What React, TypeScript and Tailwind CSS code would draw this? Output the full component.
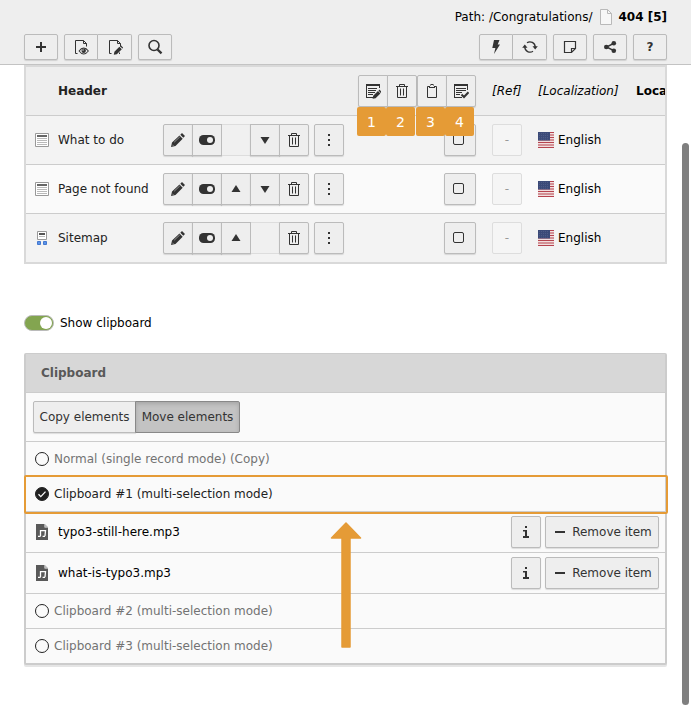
import { useState, type ReactNode } from 'react';

type IconProps = { children: ReactNode; className?: string };

function Icon({ children, className = '' }: IconProps) {
  return (
    <svg viewBox="0 0 16 16" aria-hidden="true" className={`size-4 shrink-0 ${className}`} fill="currentColor">
      {children}
    </svg>
  );
}

const PlusIcon = () => (
  <Icon>
    <path d="M7 3h2v4h4v2H9v4H7V9H3V7h4z" />
  </Icon>
);

const sheet = 'M4.500 14.500h-2v-13h8l3 3v3M10.500 1.500v3h3';

const ViewPageIcon = () => (
  <Icon>
    <path d={sheet} fill="none" stroke="currentColor" />
    <path fillRule="evenodd" d="M5.500 12Q8 8.600 10.700 8.600T16 12Q13.400 15.400 10.700 15.400T5.500 12zM6.700 12Q8.600 14.500 10.700 14.500T14.800 12Q12.800 9.500 10.700 9.500T6.700 12z" />
    <circle cx="10.700" cy="11.800" r="2.200" />
    <circle cx="10" cy="11" r=".7" fill="#eee" />
  </Icon>
);

const EditPageIcon = () => (
  <Icon>
    <path d={sheet} fill="none" stroke="currentColor" />
    <path d="M6.800 15.800l.6-3 5-5 2.400 2.400-5 5zM13 7.200l.9-.9 2.400 2.400-.9.9zM13 13v2h-1v-1z" />
  </Icon>
);

const SearchIcon = () => (
  <Icon>
    <circle cx="7" cy="6.500" r="5" fill="none" stroke="currentColor" strokeWidth="1.600" />
    <path d="M10.500 10.500l4 3.800" stroke="currentColor" strokeWidth="2.400" />
  </Icon>
);

const BoltIcon = () => (
  <Icon>
    <path d="M6 1h5.500L9.700 5.500H12L6 15l1.400-6H4.300z" />
  </Icon>
);

const RefreshIcon = () => (
  <Icon>
    <path d="M5 3.800A5.200 5.200 0 0 1 13.200 8M11 12.200A5.200 5.200 0 0 1 2.800 8" fill="none" stroke="currentColor" strokeWidth="1.300" />
    <path d="M10.500 7.300h5.300l-2.600 3.200zM.2 8.700h5.300L2.800 5.500z" />
  </Icon>
);

const NoteIcon = () => (
  <Icon>
    <path d="M2.500 2.500h11v7l-4 4h-7zM13 9.500H9.500V13" fill="none" stroke="currentColor" strokeWidth="1.200" />
  </Icon>
);

const ShareIcon = () => (
  <Icon>
    <path d="M11.800 4.300L4.500 8l7.300 3.700" fill="none" stroke="currentColor" strokeWidth="1.500" />
    <circle cx="11.800" cy="4.300" r="2.300" />
    <circle cx="4.300" cy="8" r="2.300" />
    <circle cx="11.800" cy="11.700" r="2.300" />
  </Icon>
);

const PageIcon = () => (
  <Icon className="text-[#b9b9b9]">
    <path d="M2.500 .5h7l4 4v11h-11z" fill="#f7f7f7" stroke="currentColor" />
    <path d="M9.500 .5v4h4" fill="none" stroke="currentColor" />
  </Icon>
);

const EditListIcon = () => (
  <Icon>
    <path d="M1 1h14v2H1zM1 1h1v14H1zM14 1h1v4h-1zM1 14h7v1H1zM3 5h9v1H3zM3 7h8v1H3zM3 9h7v1H3zM3 11h5v1H3z" />
    <path d="M7.600 15.800l.6-3 4.800-4.800 2.400 2.400-4.800 4.800zM13.500 7.500l1-1 2.100 2.400-1 1z" />
  </Icon>
);

const CheckListIcon = () => (
  <Icon>
    <path d="M1 1h14v2H1zM1 1h1v14H1zM14 1h1v6h-1zM1 14h8v1H1zM3 5h10v1H3zM3 7h10v1H3zM3 9h6v1H3zM3 11h4v1H3z" />
    <path d="M8.500 11.500l2.500 2.500 4.500-4.800" fill="none" stroke="currentColor" strokeWidth="2" />
  </Icon>
);

const TrashIcon = () => (
  <Icon>
    <path d="M5.500 3V1.500h5V3M2 3.500h12M3.500 3.500v11h9v-11M6.500 5.500v7M9.500 5.500v7" fill="none" stroke="currentColor" />
  </Icon>
);

const ClipboardIcon = () => (
  <Icon>
    <path d="M3.500 3.500h9v11h-9z" fill="none" stroke="currentColor" />
    <path d="M5 5V3h1.500V1h3v2H11v2z" />
    <path d="M6 4h4V3H9V2H7v1H6z" fill="#eee" />
  </Icon>
);

const PencilIcon = () => (
  <Icon>
    <path d="M1 15l1-4.500 7.500-7 3.200 3.200L5.500 14zM10.300 2.700L12 1l3 3-1.700 1.700z" />
    <path d="M4.200 10.200l5.600-5.300M2.300 12.700l1.200 1.200" stroke="#aaa" strokeWidth=".8" />
  </Icon>
);

const ToggleIcon = () => (
  <Icon>
    <rect x="0" y="3" width="16" height="10" rx="4.500" />
    <circle cx="11" cy="8" r="3" fill="#eee" />
  </Icon>
);

const UpIcon = () => (
  <Icon>
    <path d="M3.500 11L8 4l4.500 7z" />
  </Icon>
);

const DownIcon = () => (
  <Icon>
    <path d="M3.500 5L8 12l4.500-7z" />
  </Icon>
);

const DotsIcon = () => (
  <Icon>
    <path d="M7 2h2v2H7zM7 7h2v2H7zM7 12h2v2H7z" />
  </Icon>
);

const InfoIcon = () => (
  <Icon>
    <path d="M7 2h2v2H7zM5 6h4v6h2v2H5v-2h2V7.500H5z" />
  </Icon>
);

const MinusIcon = () => (
  <Icon>
    <path d="M3 7h10v2H3z" />
  </Icon>
);

const ContentIcon = () => (
  <Icon>
    <path d="M1.500 1.500h13v13h-13z" fill="#fff" stroke="#999" />
    <path d="M3 3h10v2H3z" fill="#666" />
    <path d="M3 6h10v1H3zM3 8h10v1H3zM3 10h10v1H3zM3 12h10v1H3z" fill="#b9b9b9" />
  </Icon>
);

const SitemapIcon = () => (
  <Icon>
    <path d="M3.500 1.500h9v8h-9z" fill="#fff" stroke="#999" />
    <path d="M5 3h6v2H5z" fill="#555" />
    <path d="M5 6h6v1H5z" fill="#b9b9b9" />
    <path d="M3.500 11.500h3v3h-3zM9.500 11.500h3v3h-3z" fill="#5a93e8" stroke="#4478cf" />
  </Icon>
);

const AudioFileIcon = () => (
  <Icon>
    <path d="M2 0h8.500v3.500H14V16H2z" fill="#595959" />
    <path d="M11 0l3 3h-3z" fill="#bbb" />
    <path d="M6.500 12V6.600h5l-.5 5.400M4 12.400h2.600M8.600 12.400h2.500" fill="none" stroke="#fff" strokeWidth="1.300" />
  </Icon>
);

const FlagIcon = () => (
  <Icon>
    <path d="M0 0h16v16H0z" fill="#f1dede" />
    <path d="M0 .5h16M0 3h16M0 5.500h16M0 8h16M0 10.500h16M0 13h16M0 15.500h16" stroke="#b6444f" />
    <path d="M0 0h12v8.500H0z" fill="#3b4a78" />
    <path d="M1 1.500h10M1 3.500h10M1 5.500h10M1 7.200h10" stroke="#56638c" strokeWidth=".7" strokeDasharray="1 1" />
  </Icon>
);

const buttonLook =
  'flex items-center justify-center border border-[#bbb] bg-[#eee] text-[#333] shadow-[0_1px_1px_rgba(0,0,0,0.12)]';

function ToolButton({ label, children, className = '' }: { label: string; children: ReactNode; className?: string }) {
  return (
    <button type="button" aria-label={label} className={`${buttonLook} h-[26px] w-[34px] ${className}`}>
      {children}
    </button>
  );
}

function CellButton({ label, children, className = '' }: { label: string; children: ReactNode; className?: string }) {
  return (
    <button type="button" aria-label={label} className={`${buttonLook} h-8 w-[30px] shrink-0 ${className}`}>
      {children}
    </button>
  );
}

const EmptySlot = () => <span className="h-8 w-7 shrink-0 border-y border-[#ddd] bg-[#f0f0f0]" />;

function DocHeader() {
  return (
    <header className="h-[65px] border-b border-[#c3c3c3] bg-[#eee] px-6">
      <div className="flex h-[34px] items-center justify-end text-black">
        <span>Path: /Congratulations/</span>
        <span className="mr-1 ml-[6px] flex">
          <PageIcon />
        </span>
        <strong>404 [5]</strong>
      </div>
      <div className="flex justify-between">
        <div className="flex gap-[6px]">
          <ToolButton label="Add content" className="rounded-xs"><PlusIcon /></ToolButton>
          <div className="flex">
            <ToolButton label="View page" className="rounded-l-xs"><ViewPageIcon /></ToolButton>
            <ToolButton label="Edit page" className="rounded-r-xs border-l-0"><EditPageIcon /></ToolButton>
          </div>
          <ToolButton label="Search" className="rounded-xs"><SearchIcon /></ToolButton>
        </div>
        <div className="flex gap-[6px]">
          <div className="flex">
            <ToolButton label="Clear cache" className="rounded-l-xs"><BoltIcon /></ToolButton>
            <ToolButton label="Reload" className="rounded-r-xs border-l-0"><RefreshIcon /></ToolButton>
          </div>
          <ToolButton label="Create note" className="rounded-xs"><NoteIcon /></ToolButton>
          <ToolButton label="Share" className="rounded-xs"><ShareIcon /></ToolButton>
          <ToolButton label="Help" className="rounded-xs"><b>?</b></ToolButton>
        </div>
      </div>
    </header>
  );
}

const records = [
  { title: 'What to do', icon: <ContentIcon />, up: false, down: true },
  { title: 'Page not found', icon: <ContentIcon />, up: true, down: true },
  { title: 'Sitemap', icon: <SitemapIcon />, up: true, down: false },
];

function Step({ n }: { n: number }) {
  return (
    <span className="flex size-[29px] items-center justify-center rounded-xs bg-[#e59b36] text-sm font-medium text-white">
      {n}
    </span>
  );
}

function RecordTable() {
  return (
    <div className="overflow-hidden border-2 border-[#d9d9d9]">
      <table className="w-[760px] table-fixed border-separate border-spacing-0 text-left">
        <colgroup>
          <col className="w-8" />
          <col className="w-[105px]" />
          <col className="w-[195px]" />
          <col className="w-[134px]" />
          <col className="w-[46px]" />
          <col className="w-[98px]" />
          <col />
        </colgroup>
        <thead>
          <tr className="h-[49px] bg-[#eee] *:border-b *:border-[#ccc]">
            <td />
            <th scope="col" className="font-bold">Header</th>
            <td />
            <td>
              <div className="relative flex">
                <CellButton label="Edit selected" className="rounded-l-xs"><EditListIcon /></CellButton>
                <CellButton label="Delete selected" className="-ml-px rounded-r-xs"><TrashIcon /></CellButton>
                <CellButton label="Paste to clipboard" className="rounded-l-xs"><ClipboardIcon /></CellButton>
                <CellButton label="Select all" className="-ml-px rounded-r-xs"><CheckListIcon /></CellButton>
                <div className="absolute top-full -left-px flex gap-px">
                  <div className="flex"><Step n={1} /><Step n={2} /></div>
                  <div className="flex"><Step n={3} /><Step n={4} /></div>
                </div>
              </div>
            </td>
            <th scope="col" className="font-normal whitespace-nowrap text-black italic">[Ref]</th>
            <th scope="col" className="font-normal whitespace-nowrap text-black italic">[Localization]</th>
            <th scope="col" className="font-bold whitespace-nowrap text-black">Loca</th>
          </tr>
        </thead>
        <tbody>
          {records.map((r) => (
            <tr
              key={r.title}
              className="h-[49px] *:border-b *:border-[#ccc] odd:bg-[#f3f3f3] even:bg-[#fafafa] last:h-12 last:*:border-b-0"
            >
              <td className="pl-2">{r.icon}</td>
              <td className="whitespace-nowrap">{r.title}</td>
              <td>
                <div className="flex gap-[5px]">
                  <div className="flex">
                    <CellButton label="Edit" className="rounded-l-xs"><PencilIcon /></CellButton>
                    <CellButton label="Toggle visibility" className="-ml-px"><ToggleIcon /></CellButton>
                    {r.up ? <CellButton label="Move up" className="-ml-px"><UpIcon /></CellButton> : <EmptySlot />}
                    {r.down ? (
                      <CellButton label="Move down" className={r.up ? '-ml-px' : ''}><DownIcon /></CellButton>
                    ) : (
                      <EmptySlot />
                    )}
                    <CellButton label="Delete" className={r.down ? '-ml-px rounded-r-xs' : 'rounded-r-xs'}><TrashIcon /></CellButton>
                  </div>
                  <CellButton label="More options" className="rounded-xs"><DotsIcon /></CellButton>
                </div>
              </td>
              <td>
                <label className={`${buttonLook} ml-[86px] h-8 w-8 rounded-xs pr-[3px] pb-px`}>
                  <input
                    type="checkbox"
                    aria-label={`Select ${r.title}`}
                    className="size-[11px] appearance-none rounded-xs border border-[#333] checked:bg-[#333]"
                  />
                </label>
              </td>
              <td>
                <button type="button" disabled className="block h-8 w-[30px] rounded-xs border border-[#ddd] bg-[#f5f5f5] text-[#999]">
                  -
                </button>
              </td>
              <td>
                <span className="flex items-center gap-1 text-black">
                  <FlagIcon />
                  English
                </span>
              </td>
              <td />
            </tr>
          ))}
        </tbody>
      </table>
    </div>
  );
}

function PadRow({ label, active, onSelect }: { label: string; active: boolean; onSelect: () => void }) {
  return (
    <div className="relative h-[35px] border-b border-[#ccc]">
      <label className={`flex h-full items-center gap-[5px] pl-[9px] ${active ? 'text-[#222]' : 'text-[#737373]'}`}>
        <span className="grid">
          <input
            type="radio"
            name="pad"
            checked={active}
            onChange={onSelect}
            className="size-[14px] appearance-none rounded-full border border-[#222] [grid-area:1/1] checked:bg-[#222]"
          />
          {active && (
            <svg viewBox="0 0 14 14" aria-hidden="true" className="pointer-events-none size-[14px] [grid-area:1/1]">
              <path d="M3.500 7.300l2.300 2.300 4.700-5" fill="none" stroke="#fff" strokeWidth="1.300" />
            </svg>
          )}
        </span>
        {label}
      </label>
      {active && <span className="pointer-events-none absolute -top-[2px] -right-[3px] -bottom-[3px] -left-[2px] z-10 rounded-xs border-2 border-[#e59b36]" />}
    </div>
  );
}

function FileRow({ name }: { name: string }) {
  return (
    <div className="flex h-[41px] items-center gap-1 border-b border-[#ccc] pr-[6px] pl-2">
      <AudioFileIcon />
      <span className="ml-1 grow text-black">{name}</span>
      <CellButton label={`Information on ${name}`} className="rounded-xs"><InfoIcon /></CellButton>
      <button type="button" className={`${buttonLook} h-8 w-[114px] gap-1 rounded-xs whitespace-nowrap`}>
        <MinusIcon />
        Remove item
      </button>
    </div>
  );
}

function ClipboardPanel() {
  const [pad, setPad] = useState(1);
  return (
    <section className="relative mt-[22px] rounded-xs border-x-2 border-y border-[#ccc] bg-[#fafafa] shadow-[0_2px_0_#e5e5e5]">
      <h2 className="flex h-[39px] items-center border-b border-[#ccc] bg-[#d7d7d7] pl-[15px] font-bold text-[#595959]">
        Clipboard
      </h2>
      <div className="flex h-[49px] items-center border-b border-[#ccc] pl-[7px]">
        <button type="button" className={`${buttonLook} h-8 w-[103px] rounded-l-xs whitespace-nowrap`}>
          Copy elements
        </button>
        <button
          type="button"
          aria-pressed="true"
          className="-ml-px h-8 w-[105px] rounded-r-xs border border-[#888] bg-[#c3c3c3] whitespace-nowrap text-[#333] shadow-[inset_0_2px_4px_rgba(0,0,0,0.15)]"
        >
          Move elements
        </button>
      </div>
      <PadRow label="Normal (single record mode) (Copy)" active={pad === 0} onSelect={() => setPad(0)} />
      <PadRow label="Clipboard #1 (multi-selection mode)" active={pad === 1} onSelect={() => setPad(1)} />
      <FileRow name="typo3-still-here.mp3" />
      <FileRow name="what-is-typo3.mp3" />
      <PadRow label="Clipboard #2 (multi-selection mode)" active={pad === 2} onSelect={() => setPad(2)} />
      <PadRow label="Clipboard #3 (multi-selection mode)" active={pad === 3} onSelect={() => setPad(3)} />
      <svg
        viewBox="0 0 32 126"
        aria-hidden="true"
        className="pointer-events-none absolute bottom-4 left-1/2 h-[126px] w-8 -translate-x-1/2"
      >
        <path d="M16 1L30.500 16H20v109h-8V16H1.500z" fill="#e59b36" stroke="#e59b36" strokeWidth="1.500" strokeLinejoin="round" />
      </svg>
    </section>
  );
}

export default function App() {
  return (
    <div className="relative min-h-screen overflow-hidden bg-white font-['DejaVu_Sans',sans-serif] text-xs text-[#222]">
      <DocHeader />
      <main className="px-6">
        <RecordTable />
        <label className="mt-[51px] flex h-4 items-center gap-[6px] text-black">
          <input
            type="checkbox"
            role="switch"
            defaultChecked
            className="flex h-4 w-[30px] appearance-none items-center rounded-full border border-[#bbb] bg-[#ccc] px-px before:size-3 before:rounded-full before:bg-white checked:justify-end checked:bg-[#83a550]"
          />
          Show clipboard
        </label>
        <ClipboardPanel />
      </main>
      <div className="absolute top-[143px] right-[2px] bottom-[2px] w-[7px] rounded-full bg-[#7f7f7f]" />
    </div>
  );
}
